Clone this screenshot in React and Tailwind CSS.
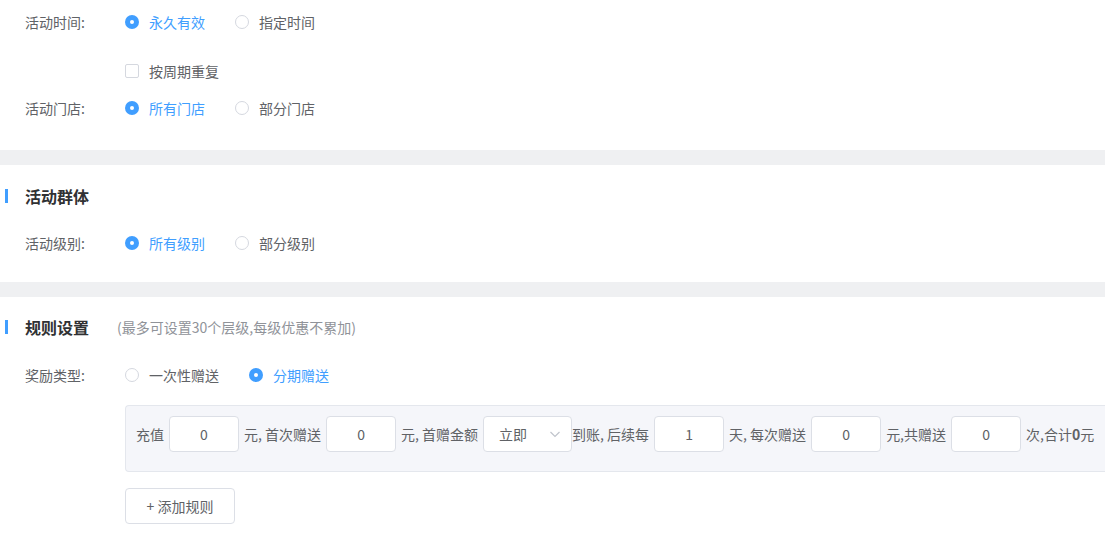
import React, { useState } from 'react'

const font = { fontFamily: '"Noto Sans CJK SC", "Microsoft YaHei", "Liberation Sans", sans-serif' }

function Radio({ checked, label, onClick, className = '' }) {
  return (
    <label onClick={onClick} className={`flex cursor-pointer items-center ${className}`}>
      {checked ? (
        <span className="flex h-[14px] w-[14px] items-center justify-center rounded-full bg-[#409eff]">
          <span className="h-[4px] w-[4px] rounded-full bg-white" />
        </span>
      ) : (
        <span className="h-[14px] w-[14px] rounded-full border border-[#d5d8df] bg-white" />
      )}
      <span className={`ml-[10px] text-[14px] ${checked ? 'text-[#409eff]' : 'text-[#606266]'}`}>{label}</span>
    </label>
  )
}

function RadioGroup({ options, value, onChange }) {
  return (
    <div className="flex items-center gap-[30px]">
      {options.map((o, i) => (
        <Radio key={o} label={o} checked={value === i} onClick={() => onChange(i)} />
      ))}
    </div>
  )
}

function FormRow({ label, children, className = '' }) {
  return (
    <div className={`flex items-center ${className}`}>
      <div className="w-[125px] shrink-0 pl-[25px] text-[14px] text-[#606266]">{label}</div>
      {children}
    </div>
  )
}

function SectionTitle({ title, hint }) {
  return (
    <div className="flex h-[24px] items-center">
      <span className="ml-[5px] h-[14px] w-[3px] shrink-0 bg-[#409eff]" />
      <span className="ml-[17px] text-[16px] font-bold text-[#303133]">{title}</span>
      {hint && <span className="ml-[28px] text-[14px] text-[#909399]">{hint}</span>}
    </div>
  )
}

function NumInput({ value }) {
  return (
    <div className="flex h-[36px] w-[70px] items-center justify-center rounded-[4px] border border-[#dcdfe6] bg-white text-[14px] text-[#606266]">
      {value}
    </div>
  )
}

function Text({ children, className = '' }) {
  return <span className={`whitespace-nowrap text-[14px] text-[#606266] ${className}`}>{children}</span>
}

export default function App() {
  const [time, setTime] = useState(0)
  const [store, setStore] = useState(0)
  const [level, setLevel] = useState(0)
  const [reward, setReward] = useState(1)
  const [repeat, setRepeat] = useState(false)

  return (
    <div style={font} className="min-h-[537px] w-[1105px] overflow-hidden bg-white">
      {/* 活动时间 / 门店 */}
      <div className="pb-[24px]">
        <FormRow label="活动时间:" className="h-[44px]">
          <RadioGroup options={['永久有效', '指定时间']} value={time} onChange={setTime} />
        </FormRow>
        <FormRow label="" className="mt-[8px] h-[38px]">
          <label onClick={() => setRepeat(!repeat)} className="flex cursor-pointer items-center">
            <span className={`h-[14px] w-[14px] rounded-[2px] border ${repeat ? 'border-[#409eff] bg-[#409eff]' : 'border-[#d5d8df] bg-white'}`} />
            <span className="ml-[10px] text-[14px] text-[#606266]">按周期重复</span>
          </label>
        </FormRow>
        <FormRow label="活动门店:" className="h-[36px]">
          <RadioGroup options={['所有门店', '部分门店']} value={store} onChange={setStore} />
        </FormRow>
      </div>

      <div className="h-[15px] bg-[#eff0f2]" />

      {/* 活动群体 */}
      <div className="pt-[19px] pb-[19px]">
        <SectionTitle title="活动群体" />
        <FormRow label="活动级别:" className="mt-[15px] h-[40px]">
          <RadioGroup options={['所有级别', '部分级别']} value={level} onChange={setLevel} />
        </FormRow>
      </div>

      <div className="h-[15px] bg-[#eff0f2]" />

      {/* 规则设置 */}
      <div className="pt-[18px] pb-[14px]">
        <SectionTitle title="规则设置" hint="(最多可设置30个层级,每级优惠不累加)" />
        <FormRow label="奖励类型:" className="mt-[16px] h-[40px]">
          <RadioGroup options={['一次性赠送', '分期赠送']} value={reward} onChange={setReward} />
        </FormRow>

        <div className="ml-[125px] mt-[10px] flex h-[67px] items-start rounded-l-[4px] border border-r-0 border-[#e4e7ed] bg-[#f5f6fa] pl-[10px] pt-[10px]">
          <div className="flex h-[36px] items-center gap-[5px]">
            <Text>充值</Text>
            <NumInput value="0" />
            <Text>元, 首次赠送</Text>
            <NumInput value="0" />
            <Text>元, 首赠金额</Text>
            <div className="flex h-[36px] w-[89px] items-center justify-between rounded-[4px] border border-[#dcdfe6] bg-white pl-[15px] pr-[10px] text-[14px] text-[#606266]">
              <span>立即</span>
              <svg width="12" height="12" viewBox="0 0 12 12" fill="none">
                <path d="M1.5 4l4.5 4.5L10.5 4" stroke="#c0c4cc" strokeWidth="1.2" />
              </svg>
            </div>
            <Text className="-ml-[5px]">到账, 后续每</Text>
            <NumInput value="1" />
            <Text>天, 每次赠送</Text>
            <NumInput value="0" />
            <Text>元,共赠送</Text>
            <NumInput value="0" />
            <Text>
              次,合计<b className="font-bold">0</b>元
            </Text>
          </div>
        </div>

        <button className="ml-[125px] mt-[16px] h-[36px] w-[110px] rounded-[4px] border border-[#dcdfe6] bg-white text-[14px] text-[#606266]">
          + 添加规则
        </button>
      </div>
    </div>
  )
}
